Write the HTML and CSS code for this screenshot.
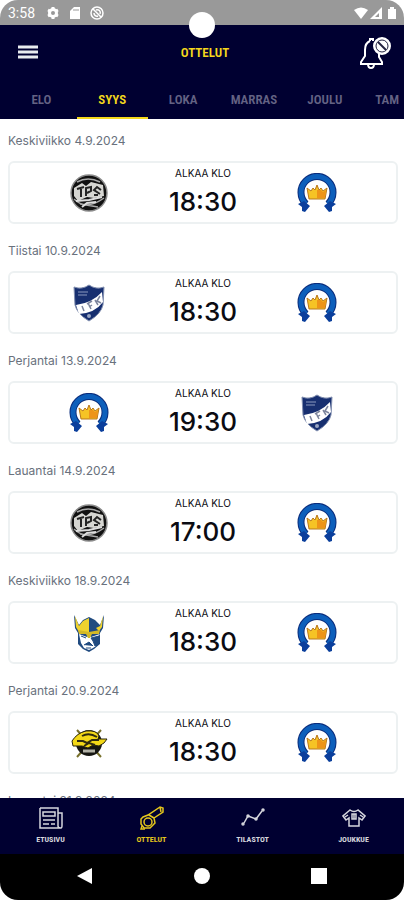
FILE: index.html
```html
<!DOCTYPE html>
<html lang="fi">
<head>
    <meta charset="UTF-8">
    <meta name="viewport" content="width=device-width, initial-scale=1.0">
    <title>Ottelut</title>
    <link rel="stylesheet" href="styles.css">
</head>
<body>
    <!-- Team logos -->
    <svg class="symbols" aria-hidden="true">
        <symbol id="blues" viewBox="0 0 40 40">
            <path d="M9 31 A16 16 0 1 1 31 31" fill="none" stroke="#0b2d7c" stroke-width="7"/>
            <path d="M9 31 A16 16 0 1 1 31 31" fill="none" stroke="#0d5fbb" stroke-width="5"/>
            <path d="M1 31 L7 28 L13 33 L8 39 L5 38 L5 34Z M39 31 L33 28 L27 33 L32 39 L35 38 L35 34Z" fill="#0b3f9c"/>
            <path d="M10 15 L14 18 L16 15 L18 17 L20 12 L22 17 L24 15 L26 18 L30 15 L28 26 L12 26Z" fill="#f6c325" stroke="#b9771d"/>
            <path d="M20 17 L24 17 L26 19 L29 17 L28 25 L20 25Z" fill="#ee9418"/>
        </symbol>
        <symbol id="tps" viewBox="0 0 40 40">
            <circle cx="20" cy="20" r="18" fill="#111" stroke="#8b8b8b" stroke-width="1.500"/>
            <path d="M8 9 Q19 3 31 9 M5 26 Q17 38 35 25 M11 31 L29 34" fill="none" stroke="#aaa" stroke-width="1.500"/>
            <path d="M5 15 L13 10 L17 13 L22 9 L34 12 L35 23 L25 25 L18 24 L9 28 L5 23Z" fill="#d6d6d2"/>
            <path d="M8 16 L15 14 M12 15 V24 M17 23 V15 L22 14 V18 L18 20 M32 17 L28 14 L25 17 L31 21 M25 22 H29" fill="none" stroke="#242424" stroke-width="2"/>
            <path d="M7 28 L20 27 L33 24 M13 34 L18 30 L27 29" fill="none" stroke="#ddd" stroke-width="2"/>
        </symbol>
        <symbol id="ifk" viewBox="0 0 40 40">
            <path d="M5 4 Q13 7 20 2 Q27 7 35 4 L34 22 Q32 31 20 38 Q8 31 6 22Z" fill="#172f70" stroke="#818eaf"/>
            <path d="M7 22 Q23 20 33 9 L34 19 Q26 30 10 31Z" fill="#fff"/>
            <path d="M13 23 L15 28 M19 20 L22 26 M18 21 L23 18 M20 24 L23 22 M26 17 L29 22 M31 13 L28 18 L32 20" fill="none" stroke="#7d859d" stroke-width="1.500"/>
            <path d="M9 9 H19 M9 12 H18" stroke="#6677a4" stroke-width="1.500"/>
            <circle cx="20" cy="33" r="2" fill="#9aa6c3"/>
        </symbol>
        <symbol id="jukurit" viewBox="0 0 40 40">
            <path d="M5 2 L10 12 L14 7 L20 4 L26 7 L31 12 L35 2 L34 15 L31 20 L31 31 L25 36 L20 39 L14 36 L9 31 L9 20 L6 15Z" fill="#214b80"/>
            <path d="M6 3 L10 13 L14 8 L20 5 V20 L10 19 L7 14Z M34 3 L31 13 L27 15 L30 18 L33 14Z" fill="#efd22e"/>
            <path d="M10 21 L18 24 L20 22 L22 24 L31 21 L28 25 L27 33 L24 35 L20 37 L15 35 L12 30Z" fill="#fff"/>
            <path d="M9 17 L20 19 L31 17 L30 21 L23 21 L21 25 L19 25 L17 21 L10 21Z" fill="#d4b927"/>
            <path d="M12 23 L17 25 M22 25 L30 23 V31 L26 33 L24 28Z M15 32 L20 29 L24 33 M17 35 H22" fill="#214b80" stroke="#214b80"/>
        </symbol>
        <symbol id="kalpa" viewBox="0 0 40 40">
            <path d="M8 7 L32 34 M32 7 L8 34" stroke="#77702b" stroke-width="2"/>
            <circle cx="20" cy="20" r="13" fill="#151511"/>
            <path d="M3 18 Q8 10 17 8 Q28 7 30 13 L29 16 L38 16 L35 20 L30 23 L24 22 L19 25 L13 23 L4 23Z" fill="#f3d817" stroke="#28240f"/>
            <path d="M13 13 Q20 9 28 14 M8 18 H14 L18 20 L23 17 H30 M15 23 L20 20 L26 22" fill="none" stroke="#302c10" stroke-width="2"/>
            <path d="M14 28 H26" stroke="#b2b2a7" stroke-width="3"/>
        </symbol>
    </svg>

    <div class="phone">
        <div class="status-bar">
            <span class="clock">3:58</span>
            <svg class="status-icon" viewBox="0 0 14 14"><circle cx="7" cy="7" r="3.500" fill="none" stroke="#fff" stroke-width="3"/><path d="M7 1V3M7 11V13M2 4L4 5M10 9L12 10M2 10L4 9M10 5L12 4" stroke="#fff" stroke-width="3"/></svg>
            <svg class="status-icon" viewBox="0 0 14 14"><path d="M6 1H12V13H2V5Z" fill="#fff"/><path d="M6 3V5M8 3V5M10 3V5" stroke="#999"/></svg>
            <svg class="status-icon" viewBox="0 0 14 14"><circle cx="7" cy="7" r="6" fill="none" stroke="#fff" stroke-width="1.500"/><path d="M3 3L11 11M4 7A3 3 0 0 0 8 10M6 4A3 3 0 0 1 10 8" fill="none" stroke="#fff" stroke-width="1.500"/></svg>
            <span class="camera"></span>
            <svg class="signals" viewBox="0 0 44 14"><path d="M0 4Q7 -1 14 4L7 13Z" fill="#fff"/><path d="M16 13L28 1V13Z" fill="#fff"/><path d="M21 11L25 7V11Z" fill="#999"/><path d="M34 3H36V1H40V3H42V13H34Z" fill="#fff"/></svg>
        </div>

        <header class="header">
            <button class="icon-button" aria-label="Valikko">
                <svg width="20" height="16" viewBox="0 0 20 16"><path d="M0 2H20M0 7H20M0 12H20" stroke="#e8ecef" stroke-width="3"/></svg>
            </button>
            <h1>OTTELUT</h1>
            <button class="icon-button" aria-label="Ilmoitukset">
                <svg width="34" height="34" viewBox="0 0 34 34" fill="none" stroke="#fff" stroke-width="2">
                    <path d="M12 5V3H15V5M12 5Q7 7 7 14V20L3 26V28H24V26L21 21V16M10 28Q10 32 13 32Q16 32 16 28"/>
                    <circle cx="24" cy="10" r="8" fill="#fff"/>
                    <circle cx="24" cy="10" r="6" stroke="#22223f" stroke-width="1"/>
                    <path d="M20 6L28 14" stroke="#22223f" stroke-width="2"/>
                </svg>
            </button>
        </header>

        <nav class="months">
            <a href="#elo">ELO</a>
            <a href="#syys" class="active">SYYS</a>
            <a href="#loka">LOKA</a>
            <a href="#marras">MARRAS</a>
            <a href="#joulu">JOULU</a>
            <a href="#tam" class="last">TAM</a>
        </nav>

        <main class="games">
            <section>
                <h2>Keskiviikko 4.9.2024</h2>
                <div class="game">
                    <svg class="logo"><use href="#tps"/></svg>
                    <div class="start"><span>ALKAA KLO</span><time>18:30</time></div>
                    <svg class="logo"><use href="#blues"/></svg>
                </div>
            </section>
            <section>
                <h2>Tiistai 10.9.2024</h2>
                <div class="game">
                    <svg class="logo"><use href="#ifk"/></svg>
                    <div class="start"><span>ALKAA KLO</span><time>18:30</time></div>
                    <svg class="logo"><use href="#blues"/></svg>
                </div>
            </section>
            <section>
                <h2>Perjantai 13.9.2024</h2>
                <div class="game">
                    <svg class="logo"><use href="#blues"/></svg>
                    <div class="start"><span>ALKAA KLO</span><time>19:30</time></div>
                    <svg class="logo"><use href="#ifk"/></svg>
                </div>
            </section>
            <section>
                <h2>Lauantai 14.9.2024</h2>
                <div class="game">
                    <svg class="logo"><use href="#tps"/></svg>
                    <div class="start"><span>ALKAA KLO</span><time>17:00</time></div>
                    <svg class="logo"><use href="#blues"/></svg>
                </div>
            </section>
            <section>
                <h2>Keskiviikko 18.9.2024</h2>
                <div class="game">
                    <svg class="logo"><use href="#jukurit"/></svg>
                    <div class="start"><span>ALKAA KLO</span><time>18:30</time></div>
                    <svg class="logo"><use href="#blues"/></svg>
                </div>
            </section>
            <section>
                <h2>Perjantai 20.9.2024</h2>
                <div class="game">
                    <svg class="logo"><use href="#kalpa"/></svg>
                    <div class="start"><span>ALKAA KLO</span><time>18:30</time></div>
                    <svg class="logo"><use href="#blues"/></svg>
                </div>
            </section>
            <section>
                <h2>Lauantai 21.9.2024</h2>
            </section>
        </main>

        <nav class="tab-bar">
            <a href="#etusivu">
                <svg viewBox="0 0 24 24"><path d="M1 2H19V20Q19 22 22 22Q23 22 23 19V7H19M1 2V22H21M4 6H16V10H4ZM4 14H16M4 18H10M12 18H16"/></svg>
                ETUSIVU
            </a>
            <a href="#ottelut" class="active">
                <svg viewBox="0 0 24 24"><path d="M3 11L8 9L20 1L23 2V6L14 12L15 17L10 22L4 22L1 18V13ZM9 9L14 12M20 1L21 6"/><circle cx="8" cy="16" r="4"/><path d="M2 20L1 23L5 23"/></svg>
                OTTELUT
            </a>
            <a href="#tilastot">
                <svg viewBox="0 0 24 24"><path d="M3 17L7 10L15 13L21 5"/><circle cx="2" cy="18" r="1"/><circle cx="7" cy="10" r="1"/><circle cx="15" cy="13" r="1"/><circle cx="22" cy="4" r="1"/></svg>
                TILASTOT
            </a>
            <a href="#joukkue">
                <svg viewBox="0 0 24 24"><path d="M8 4L1 10L4 14L7 12V20H17V12L20 14L23 10L16 4Q12 7 8 4ZM3 11L6 9M21 11L18 9"/><path d="M10 8H14V13H10ZM12 8V13"/></svg>
                JOUKKUE
            </a>
        </nav>

        <div class="system-bar">
            <button aria-label="Takaisin"><svg viewBox="0 0 16 16"><path d="M0 8L15 0V16Z"/></svg></button>
            <button aria-label="Koti"><svg viewBox="0 0 16 16"><circle cx="8" cy="8" r="8"/></svg></button>
            <button aria-label="Viimeisimmät"><svg viewBox="0 0 16 16"><path d="M0 0H16V16H0Z"/></svg></button>
        </div>
    </div>
</body>
</html>
```
FILE: styles.css
```css
* {
    box-sizing: border-box;
}
body {
    margin: 0;
    background: #fff;
    font-family: Inter, 'Liberation Sans', sans-serif;
}
button {
    padding: 0;
    border: none;
    background: none;
    cursor: pointer;
}
a {
    text-decoration: none;
}
.symbols {
    position: absolute;
    width: 0;
    height: 0;
}
.phone {
    height: 100vh;
    display: flex;
    flex-direction: column;
    overflow: hidden;
    border-radius: 18px;
}
.status-bar {
    position: relative;
    flex: none;
    display: flex;
    align-items: center;
    gap: 8px;
    height: 25px;
    padding: 0 6px 0 8px;
    background: #999;
    color: #fff;
}
.clock {
    margin-right: 3px;
    font-family: Roboto, sans-serif;
    font-size: 14px;
}
.status-icon {
    width: 14px;
    height: 14px;
}
.signals {
    width: 44px;
    height: 14px;
    margin-left: auto;
}
/* Camera hole hangs over the header */
.camera {
    position: absolute;
    top: 12px;
    left: 50%;
    width: 26px;
    height: 26px;
    border-radius: 50%;
    background: #fff;
    transform: translateX(-50%);
}
.header {
    flex: none;
    display: grid;
    grid-template-columns: 1fr auto 1fr;
    align-items: center;
    height: 55px;
    padding: 0 12px 0 18px;
    background: #000031;
}
.header h1 {
    margin: 0;
    color: #f5d91c;
    font-family: 'Roboto Condensed', Roboto, sans-serif;
    font-size: 13px;
    font-weight: 600;
}
.icon-button {
    display: flex;
}
.icon-button:last-child {
    justify-content: flex-end;
}
.months {
    flex: none;
    display: flex;
    height: 39px;
    padding-left: 6px;
    overflow: hidden;
    background: #000031;
}
.months a {
    flex: 1 1 0;
    min-width: 0;
    padding-top: 3px;
    border-bottom: 2px solid transparent;
    color: #646384;
    font-family: 'Roboto Condensed', Roboto, sans-serif;
    font-size: 13px;
    font-weight: 600;
    line-height: 34px;
    text-align: center;
}
.months .active {
    border-color: #f5d91c;
    color: #f5d91c;
}
/* The row runs on past the right edge */
.months .last {
    flex: 0 0 11%;
    padding-right: 5px;
    text-align: right;
}
.games {
    flex: 1;
    min-height: 0;
    padding: 1px 6px 0 8px;
    overflow: hidden;
}
.games h2 {
    margin: 0;
    color: #69717d;
    font-size: 12px;
    font-weight: 400;
    line-height: 41px;
}
.game {
    display: grid;
    grid-template-columns: 1fr 1fr 1fr;
    align-items: center;
    justify-items: center;
    height: 63px;
    margin-bottom: 6px;
    padding: 0 22px;
    border: 2px solid #edf1f2;
    border-radius: 6px;
}
.logo {
    width: 40px;
    height: 40px;
}
.start {
    display: flex;
    flex-direction: column;
    align-items: center;
    color: #0b0b12;
}
.start span {
    font-size: 10px;
    line-height: 18px;
}
.start time {
    font-size: 26px;
    font-weight: 500;
    line-height: 40px;
}
.tab-bar {
    flex: none;
    display: grid;
    grid-template-columns: repeat(4, 1fr);
    height: 56px;
    background: #000031;
}
.tab-bar a {
    display: flex;
    flex-direction: column;
    align-items: center;
    gap: 4px;
    padding-top: 8px;
    color: #d5d6dd;
    font-family: 'Roboto Condensed', Roboto, sans-serif;
    font-size: 8px;
    font-weight: bold;
    line-height: 12px;
}
.tab-bar .active {
    color: #e3c51c;
}
.tab-bar svg {
    width: 24px;
    height: 24px;
    fill: none;
    stroke: currentColor;
    stroke-width: 1.5;
}
.system-bar {
    flex: none;
    display: grid;
    grid-template-columns: repeat(3, 29%);
    justify-content: center;
    align-items: center;
    height: 46px;
    background: #000;
}
.system-bar svg {
    width: 16px;
    height: 16px;
    fill: #fff;
}
```
